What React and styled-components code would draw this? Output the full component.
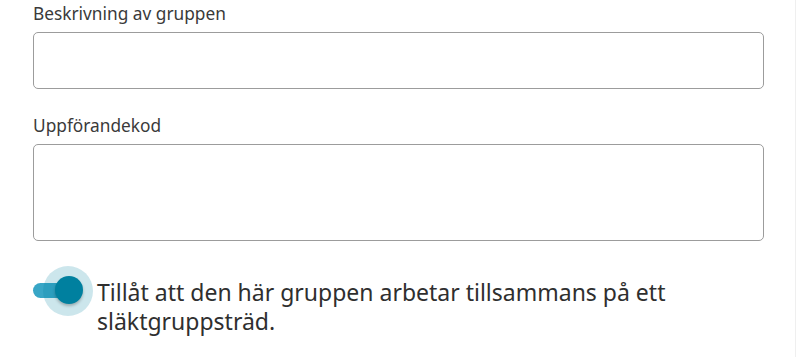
import React, { useState } from 'react'
import styled, { createGlobalStyle } from 'styled-components'

const GlobalStyle = createGlobalStyle`
  html, body {
    margin: 0;
    padding: 0;
    background: #ffffff;
  }
  body {
    font-family: "Noto Sans", "Open Sans", sans-serif;
    color: #333333;
  }
`

const Page = styled.div`
  width: 796px;
  height: 357px;
  box-sizing: border-box;
  border-right: 1px solid #efefef;
  padding: 2px 31px 0 33px;
  overflow: hidden;
`

const Field = styled.div`
  display: flex;
  flex-direction: column;
  margin-bottom: 25px;
`

const Label = styled.label`
  font-size: 17.3px;
  line-height: 24px;
  color: #3a3a3a;
  margin-bottom: 6px;
`

const TextArea = styled.textarea`
  box-sizing: border-box;
  width: 100%;
  height: ${props => props.$height}px;
  border: 1px solid #9c9c9c;
  border-radius: 5px;
  background: #fff;
  resize: none;
  font: inherit;
  padding: 8px 12px;
  outline: none;
  display: block;
`

const ToggleRow = styled.label`
  display: flex;
  align-items: flex-start;
  cursor: pointer;
`

const Switch = styled.span`
  position: relative;
  flex: none;
  width: 64px;
  height: 50px;
`

const Track = styled.span`
  position: absolute;
  left: 0;
  top: 16.5px;
  width: 48px;
  height: 15px;
  border-radius: 8px;
  background: ${props => (props.$on ? '#38a6c6' : '#b0b0b0')};
`

const Halo = styled.span`
  position: absolute;
  left: ${props => (props.$on ? 10 : -14)}px;
  top: 0;
  width: 50px;
  height: 50px;
  border-radius: 50%;
  background: rgba(0, 128, 160, 0.2);
`

const Thumb = styled.span`
  position: absolute;
  left: ${props => (props.$on ? 22 : 0)}px;
  top: 10px;
  width: 28px;
  height: 28px;
  border-radius: 50%;
  background: ${props => (props.$on ? '#00809f' : '#f5f5f5')};
  box-shadow: 0 2px 3px rgba(0, 0, 0, 0.25);
`

const ToggleText = styled.span`
  font-size: 23px;
  line-height: 29px;
  color: #2f2f2f;
  margin-top: 11.5px;
`

export default function App() {
  const [on, setOn] = useState(true)
  return (
    <>
      <GlobalStyle />
      <Page>
        <Field>
          <Label>Beskrivning av gruppen</Label>
          <TextArea $height={57} />
        </Field>
        <Field>
          <Label>Uppförandekod</Label>
          <TextArea $height={97} />
        </Field>
        <ToggleRow onClick={() => setOn(!on)}>
          <Switch>
            <Track $on={on} />
            <Halo $on={on} />
            <Thumb $on={on} />
          </Switch>
          <ToggleText>Tillåt att den här gruppen arbetar tillsammans på ett släktgruppsträd.</ToggleText>
        </ToggleRow>
      </Page>
    </>
  )
}
